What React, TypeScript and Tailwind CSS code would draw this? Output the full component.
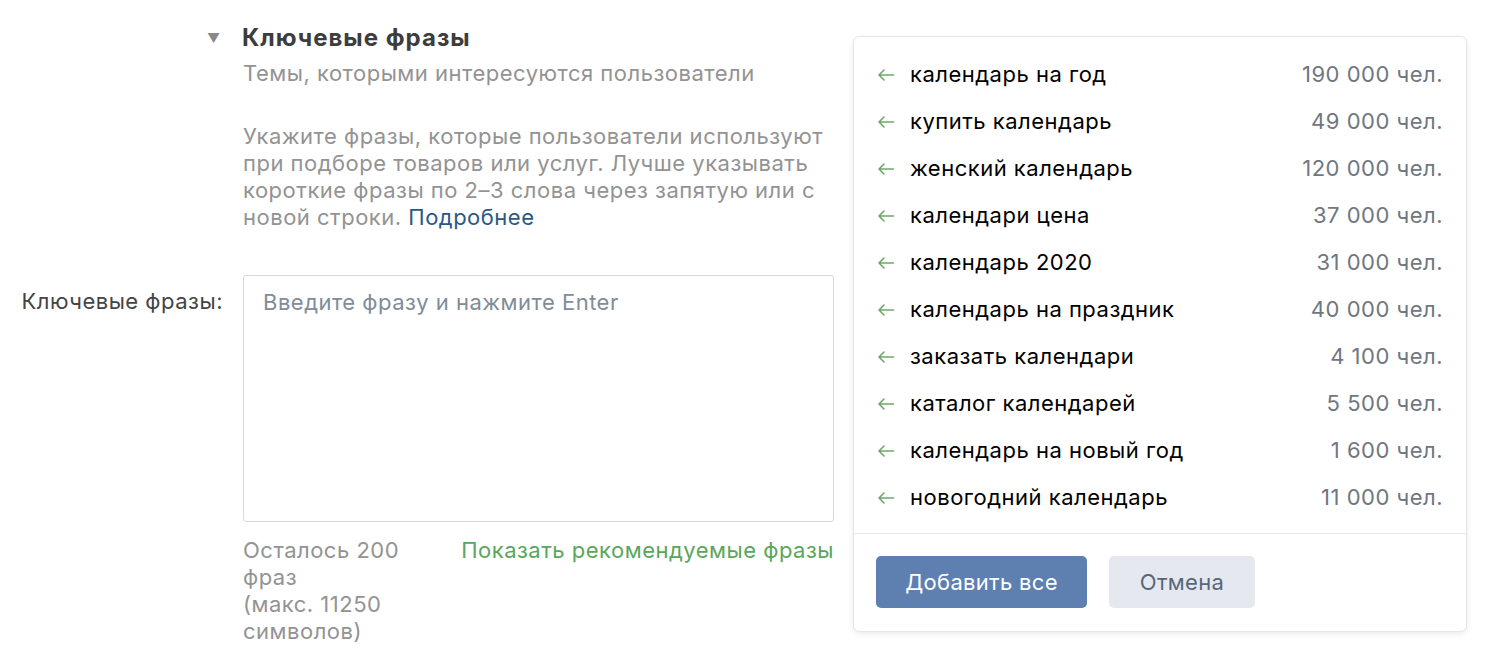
const phrases: [string, string][] = [
    ["календарь на год", "190 000 чел."],
    ["купить календарь", "49 000 чел."],
    ["женский календарь", "120 000 чел."],
    ["календари цена", "37 000 чел."],
    ["календарь 2020", "31 000 чел."],
    ["календарь на праздник", "40 000 чел."],
    ["заказать календари", "4 100 чел."],
    ["каталог календарей", "5 500 чел."],
    ["календарь на новый год", "1 600 чел."],
    ["новогодний календарь", "11 000 чел."],
];

function AddArrow() {
    return (
        <svg width="18" height="14" viewBox="0 0 18 14" fill="none" className="text-[#6fa86b] shrink-0">
            <path d="M16.5 7H2M7 2L2 7l5 5" stroke="currentColor" strokeWidth="1.6" strokeLinecap="round" strokeLinejoin="round" />
        </svg>
    );
}

function SuggestPopup() {
    return (
        <div className="absolute left-[853px] top-[36px] w-[614px] bg-white rounded-[6px] border border-[#e3e6ea] shadow-[0_2px_6px_rgba(0,0,0,0.08)]">
            <div className="pt-[14px] pb-[12px] px-[23px]">
                {phrases.map(([text, count]) => (
                    <div key={text} className="h-[47px] flex items-center text-[22px] tracking-[0.5px]">
                        <AddArrow />
                        <span className="ml-[15px] text-black">{text}</span>
                        <span className="ml-auto text-[#6f7780]">{count}</span>
                    </div>
                ))}
            </div>
            <div className="border-t border-[#e7e8ec] px-[22px] pt-[22px] pb-[23px] flex gap-[22px]">
                <button className="h-[52px] w-[211px] rounded-[5px] bg-[#5d80b0] text-white text-[22px] tracking-[0.3px]">
                    Добавить все
                </button>
                <button className="h-[52px] w-[146px] rounded-[5px] bg-[#e5e9ef] text-[#55677d] text-[22px] tracking-[0.3px]">
                    Отмена
                </button>
            </div>
        </div>
    );
}

export default function App() {
    return (
        <div
            className="relative w-[1500px] h-[656px] bg-white overflow-hidden"
            style={{ fontFamily: 'Inter, "Liberation Sans", Arial, sans-serif' }}
        >
            <div className="w-[853px] pt-[24px] text-[22px] tracking-[0.5px]">
                {/* section header */}
                <div className="flex items-center h-[28px]">
                    <span className="ml-[207px] w-[35px] text-[13px] text-[#8a8a8a] leading-none">▼</span>
                    <h2 className="text-[24px] font-bold tracking-[1px] text-[#3d3d3d]">Ключевые фразы</h2>
                </div>
                <div className="ml-[243px] mt-[8px] leading-[27px] text-[#939393]">
                    Темы, которыми интересуются пользователи
                </div>
                <p className="ml-[243px] mt-[36px] w-[592px] leading-[27px] text-[#939393]">
                    Укажите фразы, которые пользователи используют при подборе товаров или услуг. Лучше указывать
                    короткие фразы по 2–3 слова через запятую или с новой строки. <a className="text-[#2a5885]">Подробнее</a>
                </p>

                {/* form row */}
                <div className="flex mt-[44px]">
                    <label className="w-[243px] pr-[20px] pt-[13px] text-right leading-[27px] text-[#444]">
                        Ключевые фразы:
                    </label>
                    <div className="w-[591px] h-[247px] border border-[#d3d9de] rounded-[3px] px-[19px] pt-[13px] leading-[27px] text-[#818c99]">
                        Введите фразу и нажмите Enter
                    </div>
                </div>

                <div className="flex ml-[243px] mt-[15px] w-[591px] leading-[27px]">
                    <div className="w-[170px] text-[#939393]">
                        <div>Осталось 200 фраз</div>
                        <div>(макс. 11250 символов)</div>
                    </div>
                    <a className="ml-auto text-[#5aa65a]">Показать рекомендуемые фразы</a>
                </div>
            </div>

            <SuggestPopup />
        </div>
    );
}
